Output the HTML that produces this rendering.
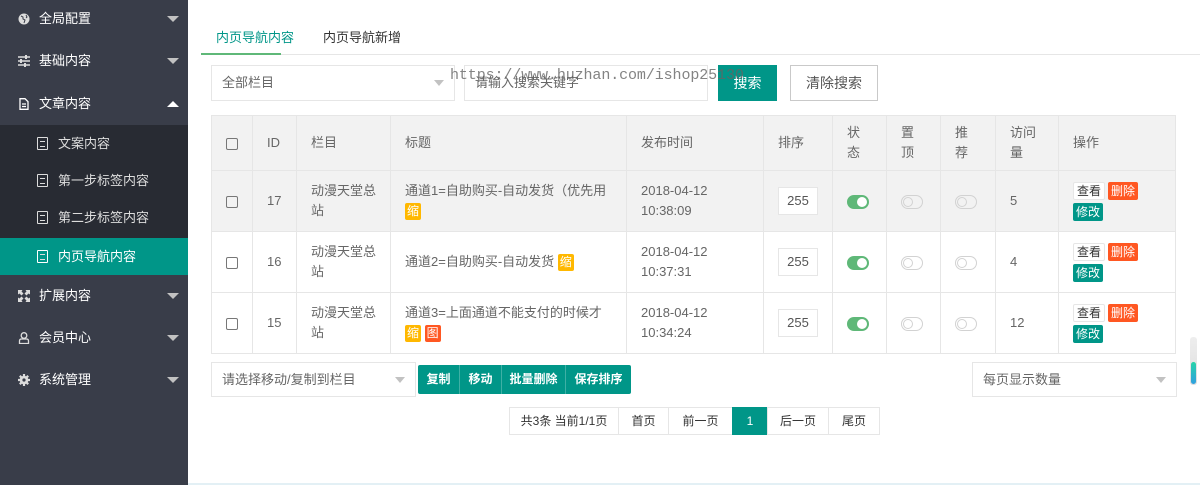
<!DOCTYPE html><html><head><meta charset="utf-8"><style>
*{box-sizing:border-box;margin:0;padding:0}
body{width:1200px;height:485px;overflow:hidden;background:#fff;font-family:"Liberation Sans","Noto Sans CJK SC",sans-serif;font-size:13px;color:#666;position:relative}
.sb{position:absolute;left:0;top:0;width:188px;height:485px;background:#393D49}
.it{position:absolute;left:0;width:188px;color:#fff;font-size:13px;line-height:20px}
.it .ic{position:absolute;left:18px;top:4px;width:12px;height:12px}
.it .tx{position:absolute;left:39px}
.it .ar{position:absolute;left:167px;top:7px;border-left:6px solid transparent;border-right:6px solid transparent;border-top:6px solid #c2c2c2}
.sub{position:absolute;top:125px;left:0;width:188px;height:113px;background:#282B33}
.si{position:absolute;left:0;width:188px;height:37px;line-height:37px;color:#ddd}
.si .tx{position:absolute;left:58px}
.doc{position:absolute;left:37px;top:12px;width:11px;height:13px;border:1.5px solid #ddd;border-radius:1px}
.doc:after{content:"";position:absolute;left:1.5px;top:3px;width:5px;height:4px;border-top:1.5px solid #ddd;border-bottom:1.5px solid #ddd}
.a{position:absolute}
.tab{top:27px;font-size:13px;color:#333}
.sel{border:1px solid #e6e6e6;background:#fff;height:36px;line-height:34px;padding-left:10px;color:#666}
.tri{position:absolute;border-left:5px solid transparent;border-right:5px solid transparent;border-top:6px solid #c2c2c2}
table{position:absolute;left:211px;top:115px;border-collapse:collapse;width:965px}
td,th{border:1px solid #e6e6e6;text-align:left;padding:0 14px;font-weight:normal;vertical-align:middle;line-height:20px}
th{background:#f2f2f2;height:55px}
td{height:61px}
tr.h td{background:#f2f2f2}
.cb{display:inline-block;width:12px;height:12px;border:1px solid #777;border-radius:2px;vertical-align:middle}
.tg{display:inline-block;background:#FFB800;color:#fff;font-size:12px;line-height:17px;padding:0 2px;border-radius:2px;margin-top:2px}
.tg.r{background:#FF5722}
.num{display:inline-block;width:40px;height:28px;border:1px solid #e6e6e6;background:#fff;line-height:26px;text-align:center;color:#555}
.sw{display:inline-block;width:22px;height:14px;border-radius:7px;border:1px solid #d2d2d2;position:relative;vertical-align:middle}
.sw:after{content:"";position:absolute;left:1px;top:1px;width:10px;height:10px;border-radius:50%;border:1px solid #d2d2d2;box-sizing:border-box}
.sw.on{background:#5FB878;border-color:#5FB878}
.sw.on:after{left:9px;background:#fff;border-color:#fff}
.b{display:inline-block;font-size:12px;line-height:18px;padding:0 3px;border-radius:2px;color:#fff}
.bv{border:1px solid #e6e6e6;color:#333;background:#fff;line-height:16px}
.bd{background:#FF5722;margin-left:3px}
.be{background:#009688;margin-top:2px}
.pg{position:absolute;top:407px;height:28px;line-height:26px;border:1px solid #e6e6e6;text-align:center;font-size:12px;color:#333;background:#fff}
</style></head><body>
<div class="sb">
<div class="it" style="top:9px"><svg class="ic" viewBox="0 0 12 12"><circle cx="6" cy="6" r="5.5" fill="#ddd"/><path d="M3 3l2 1 0 2 2 1-1 3M8 2l1 2-1 1" stroke="#393D49" fill="none"/></svg><span class="tx">全局配置</span><i class="ar"></i></div>
<div class="it" style="top:51px"><svg class="ic" viewBox="0 0 12 12"><path d="M0 2h12M0 6h12M0 10h12" stroke="#ddd" stroke-width="1.4"/><rect x="7" y="0" width="2" height="4" fill="#ddd"/><rect x="2" y="4" width="2" height="4" fill="#ddd"/><rect x="6" y="8" width="2" height="4" fill="#ddd"/></svg><span class="tx">基础内容</span><i class="ar"></i></div>
<div class="it" style="top:94px"><svg class="ic" viewBox="0 0 12 12"><path d="M2 .7h5l3 3V11.3H2z M4 6h4M4 8.5h4" stroke="#fff" stroke-width="1.3" fill="none"/></svg><span class="tx">文章内容</span><i class="ar" style="border-top:0;border-bottom:6px solid #fff"></i></div>
<div class="sub">
<div class="si" style="top:0"><i class="doc"></i><span class="tx">文案内容</span></div>
<div class="si" style="top:37px"><i class="doc"></i><span class="tx">第一步标签内容</span></div>
<div class="si" style="top:74px"><i class="doc"></i><span class="tx">第二步标签内容</span></div>
</div>
<div class="si" style="top:238px;background:#009688;color:#fff"><i class="doc" style="border-color:#fff"></i><span class="tx">内页导航内容</span></div>
<div class="it" style="top:286px"><svg class="ic" viewBox="0 0 12 12"><path d="M0 0h4.5L3.5 1.5 5.5 3.5 3.5 5.5 1.5 3.5 0 4.5z M12 0v4.5L10.5 3.5 8.5 5.5 6.5 3.5 8.5 1.5 7.5 0z M0 12V7.5l1.5 1 2-2 2 2-2 2 1 1.5z M12 12H7.5l1-1.5-2-2 2-2 2 2 1.5-1z" fill="#ddd"/></svg><span class="tx">扩展内容</span><i class="ar"></i></div>
<div class="it" style="top:328px"><svg class="ic" viewBox="0 0 12 12"><circle cx="6" cy="3.5" r="2.8" stroke="#ddd" stroke-width="1.3" fill="none"/><path d="M1.5 11.5v-2.5q0-2 2-2h5q2 0 2 2v2.5z" stroke="#ddd" stroke-width="1.3" fill="none"/></svg><span class="tx">会员中心</span><i class="ar"></i></div>
<div class="it" style="top:370px"><svg class="ic" viewBox="0 0 12 12"><circle cx="6" cy="6" r="4.3" fill="#ddd"/><path d="M6 0v12M0 6h12M1.8 1.8l8.4 8.4M10.2 1.8l-8.4 8.4" stroke="#ddd" stroke-width="2.2"/><circle cx="6" cy="6" r="1.6" fill="#393D49"/></svg><span class="tx">系统管理</span><i class="ar"></i></div>
</div>

<div class="a tab" style="left:216px;color:#009688">内页导航内容</div>
<div class="a tab" style="left:323px">内页导航新增</div>
<div class="a" style="left:201px;top:54px;width:999px;height:1px;background:#e6e6e6"></div>
<div class="a" style="left:201px;top:53px;width:80px;height:2px;background:#5FB878"></div>

<div class="a sel" style="left:211px;top:65px;width:244px">全部栏目</div>
<i class="a tri" style="left:434px;top:80px"></i>
<div class="a sel" style="left:464px;top:65px;width:244px">请输入搜索关键字</div>
<div class="a" style="left:718px;top:65px;width:59px;height:36px;line-height:36px;background:#009688;color:#fff;text-align:center;font-size:14px">搜索</div>
<div class="a" style="left:790px;top:65px;width:88px;height:36px;line-height:34px;border:1px solid #c9c9c9;color:#555;text-align:center;font-size:14px">清除搜索</div>
<div class="a" style="left:450px;top:67px;font-family:'Liberation Mono',monospace;font-size:15px;color:rgba(100,100,100,.8);letter-spacing:-0.1px">https://www.huzhan.com/ishop25130</div>

<table>
<tr><th style="width:41px"><i class="cb"></i></th><th style="width:44px">ID</th><th style="width:94px">栏目</th><th style="width:236px">标题</th><th style="width:137px">发布时间</th><th style="width:68px">排序</th><th style="width:54px">状<br>态</th><th style="width:54px">置<br>顶</th><th style="width:55px">推<br>荐</th><th style="width:63px">访问<br>量</th><th>操作</th></tr>
<tr class="h"><td><i class="cb"></i></td><td>17</td><td>动漫天堂总<br>站</td><td>通道1=自助购买-自动发货（优先用<br><span class="tg">缩</span></td><td>2018-04-12<br>10:38:09</td><td><span class="num">255</span></td><td><i class="sw on"></i></td><td><i class="sw"></i></td><td><i class="sw"></i></td><td>5</td><td><span class="b bv">查看</span><span class="b bd">删除</span><br><span class="b be">修改</span></td></tr>
<tr><td><i class="cb"></i></td><td>16</td><td>动漫天堂总<br>站</td><td>通道2=自助购买-自动发货 <span class="tg">缩</span></td><td>2018-04-12<br>10:37:31</td><td><span class="num">255</span></td><td><i class="sw on"></i></td><td><i class="sw"></i></td><td><i class="sw"></i></td><td>4</td><td><span class="b bv">查看</span><span class="b bd">删除</span><br><span class="b be">修改</span></td></tr>
<tr><td><i class="cb"></i></td><td>15</td><td>动漫天堂总<br>站</td><td>通道3=上面通道不能支付的时候才<br><span class="tg">缩</span> <span class="tg r">图</span></td><td>2018-04-12<br>10:34:24</td><td><span class="num">255</span></td><td><i class="sw on"></i></td><td><i class="sw"></i></td><td><i class="sw"></i></td><td>12</td><td><span class="b bv">查看</span><span class="b bd">删除</span><br><span class="b be">修改</span></td></tr>
</table>

<div class="a sel" style="left:211px;top:362px;width:205px;height:35px">请选择移动/复制到栏目</div>
<i class="a tri" style="left:395px;top:377px"></i>
<div class="a" style="left:418px;top:365px;width:213px;height:29px;background:#009688;border-radius:2px;color:#fff;font-size:12px;line-height:29px;font-weight:bold">
<span class="a" style="left:0;width:42px;text-align:center;border-right:1px solid #3fb0a5">复制</span><span class="a" style="left:42px;width:42px;text-align:center;border-right:1px solid #3fb0a5">移动</span><span class="a" style="left:84px;width:64px;text-align:center;border-right:1px solid #3fb0a5">批量删除</span><span class="a" style="left:148px;width:65px;text-align:center">保存排序</span></div>
<div class="a sel" style="left:972px;top:362px;width:205px;height:35px">每页显示数量</div>
<i class="a tri" style="left:1156px;top:377px"></i>

<div class="pg" style="left:509px;width:110px">共3条 当前1/1页</div>
<div class="pg" style="left:618px;width:51px">首页</div>
<div class="pg" style="left:668px;width:65px">前一页</div>
<div class="pg" style="left:732px;width:36px;background:#009688;border-color:#009688;color:#fff">1</div>
<div class="pg" style="left:767px;width:62px">后一页</div>
<div class="pg" style="left:828px;width:52px">尾页</div>

<div class="a" style="left:1190px;top:337px;width:7px;height:48px;border-radius:3px;background:linear-gradient(#eee,#ddd)"></div>
<div class="a" style="left:1191px;top:362px;width:5px;height:22px;border-radius:3px;background:linear-gradient(#27d3a8,#2fa0e0)"></div>
<div class="a" style="left:188px;top:483px;width:1012px;height:2px;background:#e3f0f5"></div>
</body></html>
